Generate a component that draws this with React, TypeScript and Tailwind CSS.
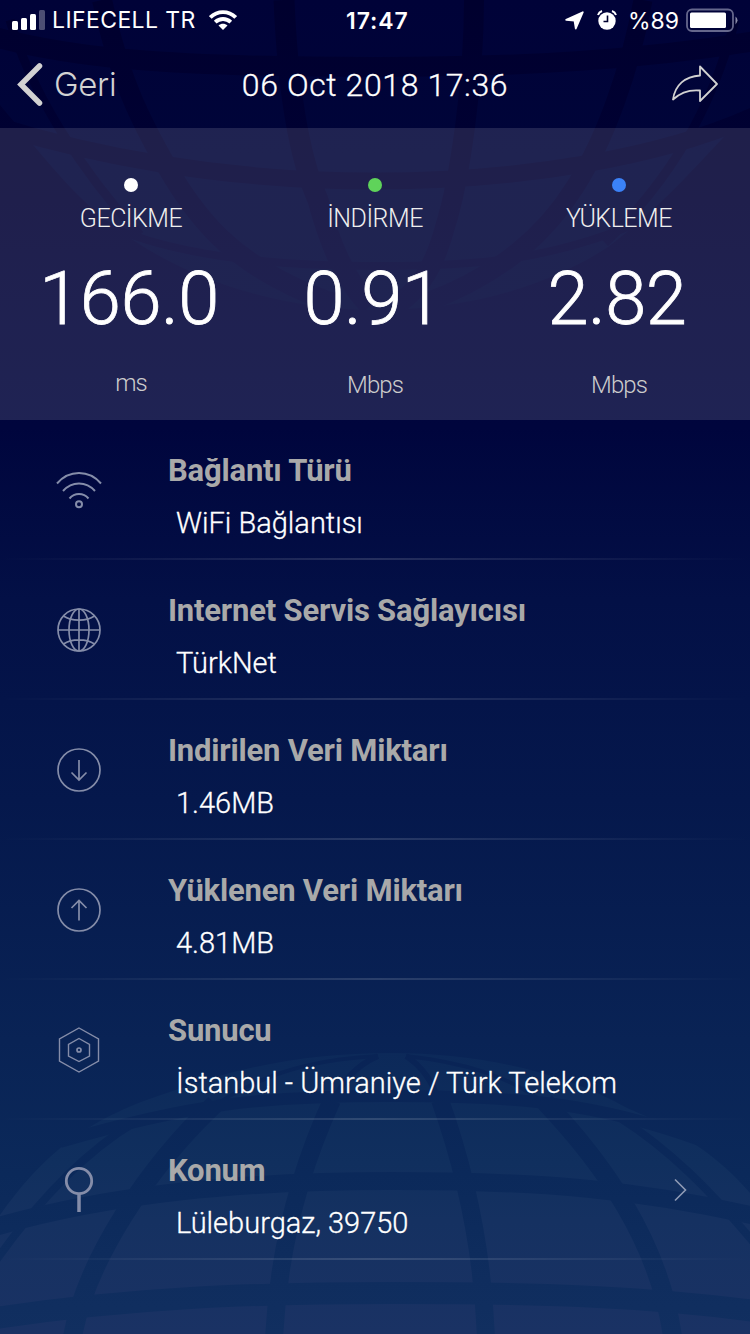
import type { ReactNode } from "react";

const bodyFont = "font-[Roboto,sans-serif]";

const stats = [
  { label: "GECİKME", value: "166.0", unit: "ms", dot: "bg-white", unitMargin: "mt-[23px]" },
  { label: "İNDİRME", value: "0.91", unit: "Mbps", dot: "bg-[#5fd35a]", unitMargin: "mt-[25px]" },
  { label: "YÜKLEME", value: "2.82", unit: "Mbps", dot: "bg-[#3b82f8]", unitMargin: "mt-[25px]" },
];

function RowIcon({ children }: { children: ReactNode }) {
  return (
    <svg
      className="w-[50px] h-[50px] text-[#858da9]"
      viewBox="0 0 50 50"
      fill="none"
      stroke="currentColor"
      strokeWidth={1.7}
    >
      {children}
    </svg>
  );
}

const rows = [
  {
    title: "Bağlantı Türü",
    value: "WiFi Bağlantısı",
    icon: (
      <RowIcon>
        <path d="M3 18.500C15 4.500 35 4.500 47 18.500M9 26c9-10 23-10 32 0M15.500 33.500c5-6 14-6 19 0" strokeWidth={2} />
        <circle cx="25" cy="39.300" r="3" strokeWidth={2} />
      </RowIcon>
    ),
  },
  {
    title: "Internet Servis Sağlayıcısı",
    value: "TürkNet",
    icon: (
      <RowIcon>
        <circle cx="25" cy="25" r="21" />
        <ellipse cx="25" cy="25" rx="10" ry="21" />
        <path d="M25 4v42M4 25h42M9.500 11c8 5.500 23 5.500 31 0M9.500 39c8-5.500 23-5.500 31 0" />
      </RowIcon>
    ),
  },
  {
    title: "Indirilen Veri Miktarı",
    value: "1.46MB",
    icon: (
      <RowIcon>
        <circle cx="25" cy="25" r="21" />
        <path d="M25 15v20M17.500 27.500l7.500 7.500 7.500-7.500" />
      </RowIcon>
    ),
  },
  {
    title: "Yüklenen Veri Miktarı",
    value: "4.81MB",
    icon: (
      <RowIcon>
        <circle cx="25" cy="25" r="21" />
        <path d="M25 35.500v-20M17.500 23l7.500-7.500 7.500 7.500" />
      </RowIcon>
    ),
  },
  {
    title: "Sunucu",
    value: "İstanbul - Ümraniye / Türk Telekom",
    icon: (
      <RowIcon>
        <path
          strokeWidth={1.4}
          d="M25 3l19.500 11v22L25 47 5.500 36V14zM25 13.500l10.500 6v11.500L25 36.500 14.500 31V19.500z"
        />
        <circle cx="25" cy="25" r="2" />
      </RowIcon>
    ),
  },
  {
    title: "Konum",
    value: "Lüleburgaz, 39750",
    chevron: true,
    icon: (
      <RowIcon>
        <circle cx="25" cy="16" r="12.700" strokeWidth={2.8} />
        <path d="M25 29V47" strokeWidth={3.5} />
      </RowIcon>
    ),
  },
];

// faint globes behind the screen: one hangs from the top, one rises from the bottom
function Backdrop() {
  return (
    <svg className="absolute inset-0 w-full h-full" viewBox="0 0 750 1334" fill="none">
      <defs>
        <linearGradient id="sky" gradientUnits="userSpaceOnUse" x1="0" y1="0" x2="0" y2="1334">
          <stop offset="0" stopColor="#00002e" />
          <stop offset="0.150" stopColor="#000134" />
          <stop offset="0.320" stopColor="#00053d" />
          <stop offset="0.450" stopColor="#031046" />
          <stop offset="0.600" stopColor="#05184c" />
          <stop offset="0.780" stopColor="#092355" />
          <stop offset="0.880" stopColor="#0b295a" />
          <stop offset="1" stopColor="#112f60" />
        </linearGradient>
        <linearGradient id="upper" gradientUnits="userSpaceOnUse" x1="0" y1="0" x2="0" y2="310">
          <stop offset="0" stopColor="#000238" />
          <stop offset="0.500" stopColor="#000539" />
          <stop offset="1" stopColor="#00063b" />
        </linearGradient>
        <linearGradient id="lower" gradientUnits="userSpaceOnUse" x1="0" y1="1050" x2="0" y2="1334">
          <stop offset="0" stopColor="#0c2959" />
          <stop offset="0.400" stopColor="#102f5e" />
          <stop offset="0.600" stopColor="#153161" />
          <stop offset="1" stopColor="#1a3264" />
        </linearGradient>
      </defs>
      <path d="M0 0H750V1334H0z" fill="url(#sky)" />
      <path
        d="M0 0V105C50 165 80 205 133 240C200 285 290 310 375 310C470 310 550 285 608 247C670 200 700 160 750 110V0z"
        fill="url(#upper)"
      />
      <g stroke="url(#sky)">
        <path strokeWidth={20} d="M-5 37C70 57 160 67 375 67C520 67 640 60 755 41" />
        <path strokeWidth={17} d="M-5 125C90 155 220 181 375 181C520 181 660 158 755 115" />
        <path strokeWidth={8} d="M100 222C170 256 270 266 375 266C480 266 550 260 640 222" />
        <path strokeWidth={20} d="M102 0C120 80 140 120 167 167C200 225 240 270 333 303" />
        <path strokeWidth={21} d="M284 0C287 70 296 150 318 200C330 245 345 280 370 306" />
        <path strokeWidth={20} d="M474 0C474 80 460 180 445 227C435 265 420 290 395 306" />
        <path strokeWidth={19} d="M643 0C630 70 605 140 575 187C545 235 500 275 425 303" />
        <path strokeWidth={9} d="M10 20C30 90 80 170 140 235" />
        <path strokeWidth={9} d="M735 20C712 110 670 180 605 243" />
      </g>
      <path
        d="M0 1334V1215C40 1160 80 1120 170 1092C240 1066 310 1053 392 1053S560 1070 627 1108C680 1130 720 1158 750 1193V1334z"
        fill="url(#lower)"
      />
      <g stroke="url(#sky)">
        <path strokeWidth={12} d="M60 1142C190 1104 260 1096 392 1096S600 1104 700 1140" />
        <path strokeWidth={18} d="M-5 1227C110 1194 240 1181 392 1181S640 1190 755 1216" />
        <path strokeWidth={22} d="M-5 1318C130 1298 250 1293 392 1293S640 1296 755 1311" />
        <path strokeWidth={8} d="M135 1122C80 1155 35 1205 -5 1262" />
        <path strokeWidth={19} d="M215 1104C150 1165 85 1260 72 1340" />
        <path strokeWidth={4} d="M378 1056C300 1060 250 1080 205 1112" />
        <path strokeWidth={18} d="M332 1100C300 1170 278 1250 274 1340" />
        <path strokeWidth={6} d="M378 1056C355 1066 342 1082 332 1104" />
        <path strokeWidth={18} d="M440 1100C465 1170 483 1250 486 1340" />
        <path strokeWidth={6} d="M406 1056C425 1068 434 1085 440 1104" />
        <path strokeWidth={19} d="M545 1102C600 1160 660 1240 673 1340" />
        <path strokeWidth={4} d="M406 1056C460 1062 510 1075 548 1106" />
        <path strokeWidth={8} d="M620 1118C670 1150 710 1190 755 1244" />
      </g>
    </svg>
  );
}

function StatusBar() {
  return (
    <div className="flex items-center h-10 px-3 text-white font-[Inter,sans-serif] text-[23px]">
      <svg className="w-[33px] h-5" viewBox="0 0 33 20" fill="currentColor">
        <rect x="0" y="11" width="6" height="9" rx="1.500" />
        <rect x="9" y="8" width="6" height="12" rx="1.500" />
        <rect x="18" y="4" width="6" height="16" rx="1.500" />
        <rect x="27" y="0" width="6" height="20" rx="1.500" opacity="0.300" />
      </svg>
      <span className="ml-[7px] w-[145px] whitespace-nowrap tracking-[0.4px]">LIFECELL TR</span>
      <svg className="ml-3 w-7 h-5" viewBox="0 0 28 20" fill="none" stroke="currentColor" strokeWidth={3.8}>
        <path d="M1.300 7.500C8.500 0.300 19.500 0.300 26.700 7.500M6.200 12.200c4.500-4.300 11.100-4.300 15.600 0" />
        <path d="M14 20l-4.500-4.500c2.500-2.300 6.500-2.300 9 0z" fill="currentColor" stroke="none" />
      </svg>
      <span className="ml-[109px] mt-0.5 font-semibold tracking-[0.9px]">17:47</span>
      <svg className="ml-auto w-[19px] h-[19px]" viewBox="0 0 19 19" fill="currentColor">
        <path
          d="M17.800 1.200L10.800 17.500 9.500 9.700 1.200 8.800z"
          stroke="currentColor"
          strokeWidth={1.8}
          strokeLinejoin="round"
        />
      </svg>
      <svg className="ml-[13px] w-5 h-5" viewBox="0 0 20 20">
        <circle cx="10" cy="11" r="8.700" fill="white" />
        <path d="M10.500 5.500v6H6.500" stroke="#00002e" strokeWidth={1.6} fill="none" />
        <path d="M1 5q1-3 4-4M19 5q-1-3-4-4" stroke="white" strokeWidth={2} fill="none" />
      </svg>
      <span className="ml-[11px] mt-0.5">%89</span>
      <svg className="ml-1.5 w-[53px] h-6" viewBox="0 0 53 24">
        <rect x="2" y="1.500" width="46" height="21.500" rx="5" fill="none" stroke="#65678c" strokeWidth={1.8} />
        <rect x="5" y="4.500" width="36" height="15.500" rx="1.500" fill="white" />
        <path d="M50.500 8.500q4 3.500 0 8z" fill="#8b8ca8" />
      </svg>
    </div>
  );
}

function Header() {
  return (
    <header className="grid grid-cols-[1fr_auto_1fr] items-center h-[88px] pl-[17px] pr-[31px]">
      <div className="flex items-center text-[#d2d2d2]">
        <svg className="w-[27px] h-[44px]" viewBox="0 0 27 44" fill="none" stroke="currentColor">
          <path d="M22.500 4L4 22.500l18.500 18.500" strokeWidth={5.5} strokeLinecap="round" />
        </svg>
        <span className="ml-2.5 mt-0.5 text-[33px] font-light font-[Inter,sans-serif] tracking-[-0.3px]">Geri</span>
      </div>
      <h1
        className={`ml-3.5 mt-0.5 text-[32px] font-light text-white tracking-[0.6px] [-webkit-text-stroke:0.3px_white] ${bodyFont}`}
      >
        06 Oct 2018 17:36
      </h1>
      <svg
        className="justify-self-end w-[48px] h-[40px] text-[#d2d2d2]"
        viewBox="0 0 48 40"
        fill="none"
        stroke="currentColor"
        strokeWidth={1.8}
        strokeLinejoin="round"
      >
        <path d="M2 35.500C4 21 14 12.500 29 11.500V2.500L46 20 29 37V26.500C18 25.500 10 28 2 35.500z" />
      </svg>
    </header>
  );
}

export default function App() {
  return (
    <div className="relative w-[750px] h-[1334px] overflow-hidden bg-[#00002e]">
      <Backdrop />
      <div className="relative">
        <StatusBar />
        <Header />
        <section className={`flex h-[292px] px-[9px] bg-white/12 ${bodyFont}`}>
          {stats.map((s) => (
            <div key={s.label} className="w-[244px] flex flex-col items-center text-white pt-[50px]">
              <span className={`w-3.5 h-3.5 rounded-full ${s.dot}`} />
              <span className="text-[25px] leading-8 mt-[11px] font-light text-[#eeeeee] tracking-[-0.5px]">
                {s.label}
              </span>
              <span className="mr-1 text-[74px] leading-[90px] mt-[19px] font-light tracking-[-0.5px] [-webkit-text-stroke:0.8px_white]">
                {s.value}
              </span>
              <span className={`text-2xl font-light text-[#cccccc] tracking-[-0.9px] ${s.unitMargin}`}>{s.unit}</span>
            </div>
          ))}
        </section>
        <main>
          {rows.map((r) => (
            <div key={r.title}>
              <div className="flex items-center h-[138px] pt-0.5 pl-[54px] pr-[62px]">
                {r.icon}
                <div className={`ml-16 flex-1 pt-[13px] ${bodyFont}`}>
                  <p className="text-[31px] leading-10 font-bold text-[#a9a9a9] tracking-[-0.2px]">{r.title}</p>
                  <p className="mt-3 ml-2 text-[29px] leading-10 font-light text-white [-webkit-text-stroke:0.3px_white]">
                    {r.value}
                  </p>
                </div>
                {r.chevron && (
                  <svg className="w-[15px] h-6" viewBox="0 0 15 24" fill="none" stroke="#8f9bb5" strokeWidth={1.6}>
                    <path d="M2 1.500L12.500 12 2 22.500" />
                  </svg>
                )}
              </div>
              <div className="h-0.5 bg-linear-to-r from-white/0 via-white/14 to-white/0" />
            </div>
          ))}
        </main>
      </div>
    </div>
  );
}
